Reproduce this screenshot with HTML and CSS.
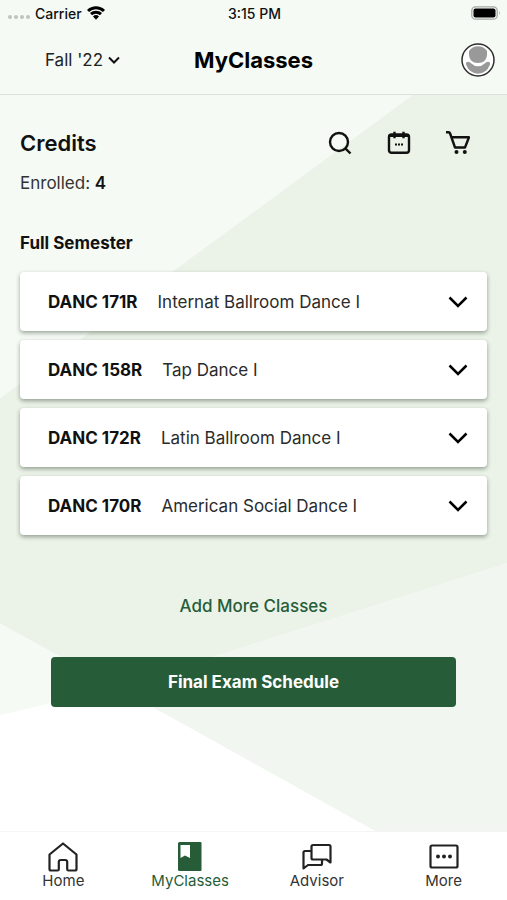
FILE: index.html
```html
<!DOCTYPE html>
<html lang="en">
<head>
<meta charset="utf-8">
<meta name="viewport" content="width=device-width, initial-scale=1">
<title>MyClasses</title>
<link rel="stylesheet" href="styles.css">
</head>
<body>
<div class="status">
  <div class="status-left">
    <svg class="signal" viewBox="0 0 22 4" width="22" height="4" aria-hidden="true"><circle cx="2" cy="2" r="2"/><circle cx="8" cy="2" r="2"/><circle cx="14" cy="2" r="2"/><circle cx="20" cy="2" r="2"/></svg>
    <span>Carrier</span>
    <svg class="wifi" viewBox="0 0 18 14" width="18" height="14" aria-hidden="true"><path d="M1 5a11.5 11.5 0 0 1 16 0M4 8.200a7.200 7.200 0 0 1 10 0"/><path class="wifi-dot" d="M6 10.500a4.400 4.400 0 0 1 6 0L9 13.700z"/></svg>
  </div>
  <span>3:15 PM</span>
  <div class="status-right">
    <svg viewBox="0 0 30 14" width="30" height="14" aria-hidden="true"><rect x=".8" y=".8" width="25.400" height="12.400" rx="3.800" fill="none" stroke="#a4a8a4" stroke-width="1.300"/><rect x="2.500" y="2.500" width="22" height="9" rx="2" fill="#000"/><path d="M28 5q1.800 2 0 4z" fill="#a4a8a4"/></svg>
  </div>
</div>
<header class="header">
  <button class="term" type="button">Fall '22
    <svg viewBox="0 0 12 8" width="12" height="8" aria-hidden="true"><path d="M1 1.500 6 6.500l5-5"/></svg>
  </button>
  <h1>MyClasses</h1>
  <button class="avatar" type="button" aria-label="Profile">
    <svg viewBox="0 0 34 34" width="34" height="34" aria-hidden="true"><circle cx="17" cy="17" r="16" fill="#fff"/><path d="M8 8Q11 3.300 17 3.300T26 8q1 12-9 12T8 8z" fill="#999"/><path d="M5 21.500q-.5-2.500 2-2.700 2 0 3 1.500 3 3 7 3t7-3q1-1.500 3-1.500 2.500.2 2 2.700Q25.500 30.700 17 30.700T5 21.500z" fill="#999"/><circle cx="17" cy="17" r="16" fill="none" stroke="#2e302e" stroke-width="1.500"/></svg>
  </button>
</header>
<main class="main">
  <svg class="backdrop" viewBox="0 0 507 737" preserveAspectRatio="none" aria-hidden="true">
    <path d="M0 0H507V737H0z" fill="#f5faf4"/>
    <path d="M413 0H507V469L117 593 0 529V304z" fill="#ebf2e8"/>
    <path d="M507 469V737H375L117 593z" fill="#f1f7f0"/>
    <path d="M0 621 117 593 375 737H0z" fill="#fff"/>
  </svg>
  <section class="summary">
    <div class="summary-head">
      <h2>Credits</h2>
      <div class="tools">
        <button type="button" aria-label="Search"><svg viewBox="0 0 24 24" width="24" height="24"><circle cx="11" cy="11" r="9"/><path d="m17.300 17.300 5.200 5.200"/></svg></button>
        <button type="button" aria-label="Calendar"><svg viewBox="0 0 24 24" width="24" height="24"><rect x="2" y="3.500" width="20" height="18.300" rx="2.500"/><path d="M2.500 4.500h19" stroke-width="3"/><path d="M7.500.8v6.500M16.500.8v6.500"/><path d="M8 13.500h2M11 13.500h2M14 13.500h2" stroke-width="2"/></svg></button>
        <button type="button" aria-label="Cart"><svg viewBox="0 0 24 24" width="24" height="24"><path d="M0 1.300h2.500q1.200 0 1.600 1.200L9 16.500h10L23 6.300H5.600"/><circle class="wheel" cx="10.500" cy="21" r="2"/><circle class="wheel" cx="18.800" cy="21" r="2"/></svg></button>
      </div>
    </div>
    <p class="enrolled">Enrolled: <strong>4</strong></p>
  </section>
  <section class="semester">
    <h3>Full Semester</h3>
    <ul class="classes">
      <li><button class="card" type="button"><strong>DANC 171R</strong><span>Internat Ballroom Dance I</span><svg viewBox="0 0 20 12" width="20" height="12" aria-hidden="true"><path d="m1.500 1.500 8.500 8.500 8.500-8.500"/></svg></button></li>
      <li><button class="card" type="button"><strong>DANC 158R</strong><span>Tap Dance I</span><svg viewBox="0 0 20 12" width="20" height="12" aria-hidden="true"><path d="m1.500 1.500 8.500 8.500 8.500-8.500"/></svg></button></li>
      <li><button class="card" type="button"><strong>DANC 172R</strong><span>Latin Ballroom Dance I</span><svg viewBox="0 0 20 12" width="20" height="12" aria-hidden="true"><path d="m1.500 1.500 8.500 8.500 8.500-8.500"/></svg></button></li>
      <li><button class="card" type="button"><strong>DANC 170R</strong><span>American Social Dance I</span><svg viewBox="0 0 20 12" width="20" height="12" aria-hidden="true"><path d="m1.500 1.500 8.500 8.500 8.500-8.500"/></svg></button></li>
    </ul>
  </section>
  <div class="actions">
    <a class="add" href="#add">Add More Classes</a>
    <button class="exam" type="button">Final Exam Schedule</button>
  </div>
</main>
<nav class="tabs">
  <a href="#home"><svg viewBox="0 0 30 30" width="30" height="30" aria-hidden="true"><path d="M1.500 12.500 15 1.500l13.500 11V27q0 1.500-1.500 1.500h-6.500q-1.300 0-1.300-1.300V20q0-2-2-2h-4.400q-2 0-2 2v7.200q0 1.300-1.300 1.300H3q-1.500 0-1.500-1.500z"/></svg><span>Home</span></a>
  <a class="current" href="#classes" aria-current="page"><svg viewBox="0 0 30 30" width="30" height="30" aria-hidden="true"><path fill-rule="evenodd" d="M4.500 0h21q1 0 1 1v27q0 1-1 1h-21Q3 29 3 27.500v-26Q3 0 4.500 0zM5.500 3v13l4.500-2.500L15 16V3z"/></svg><span>MyClasses</span></a>
  <a href="#advisor"><svg viewBox="0 0 30 30" width="30" height="30" aria-hidden="true"><path d="M9.500 4.500Q9.500 3 11 3h16q1.500 0 1.500 1.500v16l-4-3H11q-1.500 0-1.500-1.500zM9.500 9H3q-1.500 0-1.500 1.500v16l4.500-3.500h12.500q1.500 0 1.500-1.500v-4"/></svg><span>Advisor</span></a>
  <a href="#more"><svg viewBox="0 0 30 30" width="30" height="30" aria-hidden="true"><rect x="1.500" y="3.500" width="27" height="22" rx="1.500"/><g class="dots"><circle cx="9" cy="14.500" r="2"/><circle cx="15" cy="14.500" r="2"/><circle cx="21" cy="14.500" r="2"/></g></svg><span>More</span></a>
</nav>
</body>
</html>
```
FILE: styles.css
```css
* { box-sizing: border-box; }
body {
  margin: 0;
  min-height: 100vh;
  display: flex;
  flex-direction: column;
  background: #f5faf4;
  color: #111;
  font-family: Inter, "Liberation Sans", sans-serif;
}
h1, h2, h3, p, ul { margin: 0; padding: 0; }
ul { list-style: none; }
button { margin: 0; padding: 0; border: 0; background: none; color: inherit; font: inherit; cursor: pointer; }
a { color: inherit; text-decoration: none; }
svg { display: block; flex: none; }

.status {
  display: grid;
  grid-template-columns: 1fr auto 1fr;
  align-items: center;
  height: 26px;
  padding: 0 6px 0 8px;
  font-size: 14px;
  font-weight: 500;
}
.status-left { display: flex; align-items: center; gap: 5px; }
.signal { margin-top: 8px; fill: #bfc3bf; }
.wifi { fill: none; stroke: #000; stroke-width: 3; }
.wifi-dot { fill: #000; stroke: none; }
.status-right { justify-self: end; }

.header {
  display: grid;
  grid-template-columns: 1fr auto 1fr;
  align-items: center;
  height: 69px;
  padding: 0 12px 0 45px;
  border-bottom: 1px solid #dde1dd;
}
.header h1 { margin-right: 33px; font-size: 22px; font-weight: 700; color: #000; }
.term { display: flex; align-items: center; gap: 5px; justify-self: start; font-size: 17px; color: #222; }
.term svg { fill: none; stroke: #111; stroke-width: 2; }
.avatar { justify-self: end; }

.main { position: relative; z-index: 0; flex: 1; padding: 32px 20px; }
.backdrop { position: absolute; inset: 0; z-index: -1; width: 100%; height: 100%; }
.summary-head { display: flex; justify-content: space-between; align-items: center; height: 32px; }
.summary h2 { font-size: 22px; font-weight: 600; }
.tools { display: flex; gap: 35px; margin-right: 17px; }
.tools svg { fill: none; stroke: #111; stroke-width: 2.400; stroke-linejoin: round; }
.tools .wheel { fill: #111; stroke: none; }
.enrolled { margin-top: 12px; font-size: 17px; line-height: 24px; color: #333; }
.enrolled strong { font-weight: 600; color: #111; }
.semester h3 { margin-top: 36px; font-size: 17px; line-height: 24px; font-weight: 700; }

.classes { display: grid; gap: 9px; margin-top: 17px; }
.card {
  display: flex;
  align-items: center;
  gap: 20px;
  width: 100%;
  height: 59px;
  padding: 0 19px 0 28px;
  border-radius: 4px;
  background: #fff;
  box-shadow: 0 2px 4px rgb(40 60 40 / 45%);
  font-size: 17px;
  text-align: left;
}
.card strong { font-weight: 700; }
.card span { flex: 1; color: #2b2b2b; }
.card svg { fill: none; stroke: #000; stroke-width: 2.500; }

.actions { display: flex; flex-direction: column; align-items: center; gap: 39px; margin-top: 59px; padding: 0 31px; }
.add { font-size: 17px; line-height: 24px; font-weight: 500; color: #265d38; }
.exam { width: 100%; height: 50px; border-radius: 4px; background: #265d38; color: #fff; font-size: 17px; font-weight: 700; }

.tabs {
  display: grid;
  grid-template-columns: repeat(4, 1fr);
  height: 69px;
  padding-top: 10px;
  border-top: 1px solid #f5f5f5;
  background: #fff;
  font-size: 15px;
  color: #333;
}
.tabs a { display: flex; flex-direction: column; align-items: center; line-height: 18px; }
.tabs svg { fill: none; stroke: #222; stroke-width: 2.200; stroke-linejoin: round; }
.tabs .dots { fill: #222; stroke: none; }
.tabs .current { color: #265d38; }
.tabs .current svg { fill: #265d38; stroke: none; }
```
